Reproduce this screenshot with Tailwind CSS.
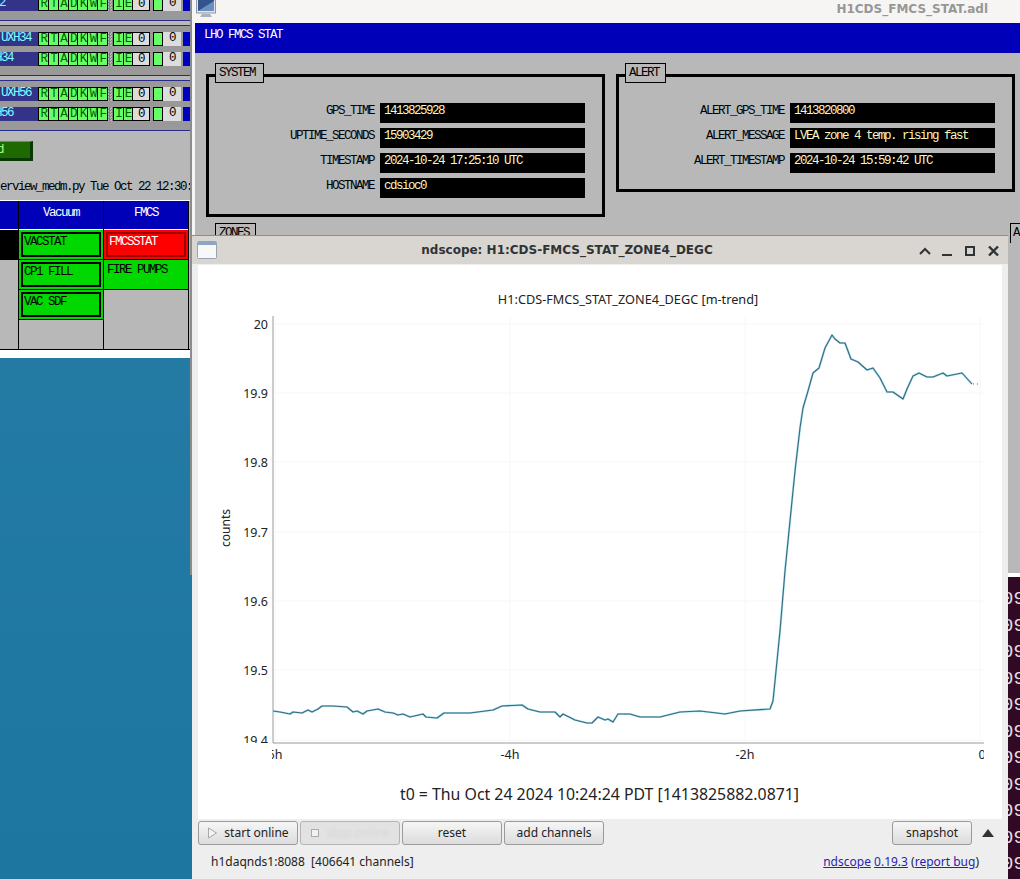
<!DOCTYPE html>
<html lang="en">
<head>
  <meta charset="UTF-8" />
  <title>ndscope on FMCS STAT</title>
  <script src="https://cdn.jsdelivr.net/npm/@tailwindcss/browser@4"></script>
</head>
<body class="bg-[#1f7aa3]">
<div class="relative w-[1020px] h-[879px] overflow-hidden bg-gradient-to-b from-[#287fa8] to-[#1c76a0] font-['Liberation_Mono',monospace] text-[12.5px] tracking-[-1.5px]">

  <!-- left overview window -->
  <div class="absolute left-0 top-0 w-[190px] h-[358px] bg-[#b8b8b8] overflow-hidden">
    <div id="bands" class="flex flex-col"></div>
    <div class="mt-[10px] w-[33px] h-[20px] bg-[#1f6a00] border-t border-t-[#5f9a48] border-r-[3px] border-b-[3px] border-r-[#063a00] border-b-[#063a00] text-[#a8ff80] leading-[16px]">
      <span class="block -ml-[3px]">d</span>
    </div>
    <div class="mt-[19px] h-[20px] leading-[14px] whitespace-nowrap text-black">erview_medm.py Tue Oct 22 12:30:</div>
    <div class="flex border-t border-white">
      <div class="w-[19px] h-[149px] border-r border-black flex flex-col">
        <div class="h-[29px] bg-[#0000b8] border-b border-white"></div>
        <div class="h-[30px] bg-black"></div>
      </div>
      <div class="w-[85px] border-r border-black flex flex-col">
        <div class="h-[29px] bg-[#0000b8] text-white text-center leading-[24px] border-b border-white">Vacuum</div>
        <div class="h-[30px] bg-[#00d800] border-b border-black p-[2px]"><div class="h-full border-2 border-black pl-[1px] leading-[17px]">VACSTAT</div></div>
        <div class="h-[30px] bg-[#00d800] border-b border-black p-[2px]"><div class="h-full border-2 border-black pl-[1px] leading-[17px]">CP1 FILL</div></div>
        <div class="h-[30px] bg-[#00d800] border-b border-black p-[2px]"><div class="h-full border-2 border-black pl-[1px] leading-[17px]">VAC SDF</div></div>
      </div>
      <div class="w-[85px] border-r border-black flex flex-col">
        <div class="h-[29px] bg-[#0000b8] text-white text-center leading-[24px] border-b border-white">FMCS</div>
        <div class="h-[30px] bg-[#ff0000] border-b border-black p-[2px] text-white"><div class="h-full border-2 border-[#a00000] pl-[1px] leading-[17px]">FMCSSTAT</div></div>
        <div class="h-[30px] bg-[#00d800] border-b border-black pl-[3px] pt-[2px] leading-[17px]">FIRE PUMPS</div>
      </div>
    </div>
    <div class="h-[1px] bg-black -mt-[1px] relative"></div>
    <div class="h-[8px] bg-white"></div>
  </div>
  <div class="absolute left-[190px] top-0 w-[2px] h-[575px] bg-[#8c8c8c]"></div>

  <!-- FMCS STAT window -->
  <div class="absolute left-[192px] top-0 w-[828px] h-[575px] bg-[#f6f5f4] flex flex-col">
    <div class="h-[23px] flex items-start justify-between">
      <svg class="ml-[4px]" width="20" height="18" viewBox="0 0 20 18">
        <rect x="0.5" y="-4" width="19" height="17" fill="#dfe5ea" stroke="#8d99a3"/>
        <rect x="2" y="-3" width="16" height="14" fill="#31548c"/>
        <path d="M2 11 18 1V11Z" fill="#6c8fc0"/>
        <path d="M6 14h8l2 3H4Z" fill="#aab2ba"/>
      </svg>
      <div class="mr-[32px] mt-[2px] text-[12px] tracking-normal leading-[15px] font-bold text-[#979797] font-['DejaVu_Sans',sans-serif]">H1CDS_FMCS_STAT.adl</div>
    </div>
    <div class="ml-[3px] h-[30px] bg-[#0000b8] text-white pl-[9px] leading-[24px]">LHO FMCS STAT</div>
    <div class="ml-[3px] flex-1 bg-[#b8b8b8] pl-[11px] pt-[21px]">
      <div class="flex gap-[11px]">
        <div class="relative w-[399px] h-[143px] border-[3px] border-black flex flex-col gap-[5px] pt-[26px]">
          <div class="absolute left-[6px] -top-[14px] h-[20px] w-[49px] border border-black bg-[#b8b8b8] pl-[3px] leading-[19px]">SYSTEM</div>
          <div class="flex gap-[6px] h-[20px]"><div class="w-[165px] text-right leading-[17px]">GPS_TIME</div><div class="w-[205px] bg-black text-[#f8f8c0] pl-[4px] leading-[17px]">1413825928</div></div>
          <div class="flex gap-[6px] h-[20px]"><div class="w-[165px] text-right leading-[17px]">UPTIME_SECONDS</div><div class="w-[205px] bg-black text-[#f8f8c0] pl-[4px] leading-[17px]">15903429</div></div>
          <div class="flex gap-[6px] h-[20px]"><div class="w-[165px] text-right leading-[17px]">TIMESTAMP</div><div class="w-[205px] bg-black text-[#f8f8c0] pl-[4px] leading-[17px]">2024-10-24 17:25:10 UTC</div></div>
          <div class="flex gap-[6px] h-[20px]"><div class="w-[165px] text-right leading-[17px]">HOSTNAME</div><div class="w-[205px] bg-black text-[#f8f8c0] pl-[4px] leading-[17px]">cdsioc0</div></div>
        </div>
        <div class="relative w-[399px] h-[118px] border-[3px] border-black flex flex-col gap-[5px] pt-[26px]">
          <div class="absolute left-[6px] -top-[14px] h-[20px] w-[41px] border border-black bg-[#b8b8b8] pl-[3px] leading-[19px]">ALERT</div>
          <div class="flex gap-[6px] h-[20px]"><div class="w-[165px] text-right leading-[17px]">ALERT_GPS_TIME</div><div class="w-[205px] bg-black text-[#f8f8c0] pl-[4px] leading-[17px]">1413820800</div></div>
          <div class="flex gap-[6px] h-[20px]"><div class="w-[165px] text-right leading-[17px]">ALERT_MESSAGE</div><div class="w-[205px] bg-black text-[#f8f8c0] pl-[4px] leading-[17px]">LVEA zone 4 temp. rising fast</div></div>
          <div class="flex gap-[6px] h-[20px]"><div class="w-[165px] text-right leading-[17px]">ALERT_TIMESTAMP</div><div class="w-[205px] bg-black text-[#f8f8c0] pl-[4px] leading-[17px]">2024-10-24 15:59:42 UTC</div></div>
        </div>
      </div>
      <div class="flex justify-between mt-[6px] pl-[9px] h-[20px] pr-0">
        <div class="w-[41px] border border-black pl-[3px] leading-[19px]">ZONES</div>
        <div class="w-[10px] border-l border-t border-black pl-[2px] leading-[19px] overflow-hidden">A</div>
      </div>
    </div>
  </div>

  <!-- terminal peeking out on the right -->
  <div class="absolute left-[1008px] top-[573px] w-[12px] h-[306px] bg-white pt-[4px]">
    <div id="term" class="h-[302px] bg-[#300a24] overflow-hidden flex flex-col pt-[9px]"></div>
  </div>

  <!-- ndscope window -->
  <div class="absolute left-[192px] top-[235px] w-[816px] h-[644px] bg-[#eeeeef] border-t border-[#8e8e8e] flex flex-col tracking-normal font-['Noto_Sans',sans-serif] text-[12px] text-[#222]">
    <div class="h-[28px] shrink-0 bg-[#d9d6d2] flex items-center relative">
      <svg class="ml-[5px]" width="20" height="18" viewBox="0 0 20 18">
        <rect x="0.5" y="0.5" width="19" height="17" rx="1" fill="#f7f8fa" stroke="#9aa3ad"/>
        <rect x="1" y="1" width="18" height="3" fill="#8aa6c8"/>
      </svg>
      <div class="absolute left-0 right-[66px] text-center text-[12px] font-bold font-['DejaVu_Sans',sans-serif] text-[#2e3436]">ndscope: H1:CDS-FMCS_STAT_ZONE4_DEGC</div>
      <svg class="absolute left-[726px] top-[9px]" width="84" height="12" viewBox="0 0 84 12" fill="none" stroke="#2e3436" stroke-width="2">
        <path d="M2 9 7 4 12 9"/>
        <path d="M24 10H34"/>
        <rect x="48" y="2" width="8" height="8"/>
        <path d="M71 1.500 80 10.500M80 1.500 71 10.500" stroke-width="2.400"/>
      </svg>
    </div>
    <div class="h-[1px] shrink-0 bg-[#eeeeef]"></div>
    <div class="mx-[6px] h-[554px] shrink-0 bg-white">
      <svg width="804" height="554" viewBox="198 264 804 554" font-family="Noto Sans, sans-serif" fill="#222">
        <defs>
          <clipPath id="xclip"><rect x="272" y="744" width="712" height="30"/></clipPath>
          <clipPath id="yclip"><rect x="230" y="310" width="42" height="432"/></clipPath>
          <polyline id="trace" fill="none" stroke-linejoin="round" points="273,710 280,711 290,713 293,711 302,712 308,709 312,711 318,708 322,705 333,705 347,706 353,711 357,710 363,713 367,710 378,708 385,711 393,712 398,714 403,713 410,716 423,713 426,716 437,717 444,712 470,712 493,709 502,705 522,704 528,708 540,711 555,711 560,716 563,713 575,719 587,722 592,722 598,716 605,719 608,718 613,721 618,713 630,713 640,716 660,716 680,711 700,710 725,713 740,710 770,708 773,700 776,670 780,630 785,570 790,520 795,470 800,427 803,407 808,390 813,372 819,367 825,347 832,334 835,338 840,342 845,342 851,358 858,361 867,369 873,367 880,377 887,391 893,391 903,398 907,388 913,375 919,372 927,376 933,376 943,372 947,375 962,372 972,383"/>
        </defs>
        <g stroke="#f7f7f7" stroke-width="1">
          <path d="M273 323H984M273 392H984M273 461H984M273 531H984M273 600H984M273 669H984M273 739H984"/>
          <path d="M275 315V742M510 315V742M745 315V742M980 315V742"/>
        </g>
        <path d="M273 315V742H984" fill="none" stroke="#9a9a9a" stroke-width="1"/>
        <use href="#trace" stroke="#a6e2ea" stroke-width="2.200"/>
        <use href="#trace" stroke="#3a6883" stroke-width="1.100"/>
        <path d="M973 383H980" stroke="#a05060" stroke-width="1" stroke-dasharray="1 3" fill="none"/>
        <g font-size="12.500" text-anchor="end">
          <text x="268" y="328">20</text>
          <text x="268" y="397">19.9</text>
          <text x="268" y="466">19.8</text>
          <text x="268" y="536">19.7</text>
          <text x="268" y="605">19.6</text>
          <text x="268" y="674">19.5</text>
          <text x="268" y="744" clip-path="url(#yclip)">19.4</text>
        </g>
        <g font-size="12.500" text-anchor="middle" clip-path="url(#xclip)">
          <text x="273" y="758">-6h</text>
          <text x="510" y="758">-4h</text>
          <text x="745" y="758">-2h</text>
          <text x="982" y="758">0</text>
        </g>
        <text x="628" y="303" font-size="12.700" text-anchor="middle">H1:CDS-FMCS_STAT_ZONE4_DEGC [m-trend]</text>
        <text x="230" y="527" font-size="12" text-anchor="middle" transform="rotate(-90 230 527)">counts</text>
        <text x="599.500" y="799" font-size="15.850" text-anchor="middle">t0 = Thu Oct 24 2024 10:24:24 PDT [1413825882.0871]</text>
      </svg>
    </div>
    <div class="flex items-center h-[24px] mt-[2px] ml-[6px] gap-[2px]">
      <button class="w-[100px] h-[24px] rounded-[3px] border border-[#9a9a9a] bg-gradient-to-b from-[#f6f6f6] to-[#dcdcdc] flex items-center justify-center gap-[6px]">
        <svg width="11" height="12" viewBox="0 0 11 12" fill="none" stroke="#a8a8a8"><path d="M1.500 1 9.500 6 1.500 11Z" fill="#f4f4f4"/></svg>start online</button>
      <button class="w-[100px] h-[24px] rounded-[3px] border border-[#b4b4b4] bg-[#e2e2e2] flex items-center justify-center gap-[8px] text-[#d8d8d8]">
        <span class="w-[8px] h-[8px] border border-[#aaa] bg-[#f2f2f2]"></span><span class="blur-[1px]">stop online</span></button>
      <button class="w-[100px] h-[24px] rounded-[3px] border border-[#9a9a9a] bg-gradient-to-b from-[#f6f6f6] to-[#dcdcdc]">reset</button>
      <button class="w-[100px] h-[24px] rounded-[3px] border border-[#9a9a9a] bg-gradient-to-b from-[#f6f6f6] to-[#dcdcdc]">add channels</button>
      <button class="ml-auto w-[80px] h-[24px] rounded-[3px] border border-[#9a9a9a] bg-gradient-to-b from-[#f6f6f6] to-[#dcdcdc]">snapshot</button>
      <svg class="ml-[8px] mr-[14px]" width="12" height="8" viewBox="0 0 12 8"><path d="M6 0 12 8H0Z" fill="#333"/></svg>
    </div>
    <div class="flex justify-between items-center h-[24px] mt-[5px] pl-[19px] pr-[29px] text-[12px]">
      <span class="whitespace-pre">h1daqnds1:8088  [406641 channels]</span>
      <span><a class="text-[#2a1fb0] underline">ndscope</a> <a class="text-[#2a1fb0] underline">0.19.3</a> (<a class="text-[#2a1fb0] underline">report bug</a>)</span>
    </div>
  </div>
</div>

<script>
  // MEDM status rows
  const rowHtml = (label, pad) => `
    <div class="flex items-center h-[14px] shrink-0 text-[#006400]">
      <div class="w-[38px] h-full bg-[#33338a] text-[#80ffff] leading-[13px] flex justify-end overflow-hidden whitespace-nowrap ${pad}">${label}</div>
      <div class="flex w-[70px] border border-black bg-[#66ff66] h-full">
        ${['R','T','A','D','K','W','F'].map(l => `<div class="flex-1 border-r border-black last:border-r-0 text-center leading-[12px]">${l}</div>`).join('')}
      </div>
      <div class="w-[5px] h-full bg-[repeating-conic-gradient(#808080_0_25%,#b8b8b8_0_50%)] bg-[length:3px_3px]"></div>
      <div class="flex w-[20px] border border-black bg-[#66ff66] h-full">
        ${['I','E'].map(l => `<div class="flex-1 border-r border-black last:border-r-0 text-center leading-[12px]">${l}</div>`).join('')}
      </div>
      <div class="w-[17px] h-full bg-[#dcdcdc] border-y border-r border-black text-black text-center leading-[12px]">0</div>
      <div class="w-[3px]"></div>
      <div class="w-[10px] h-full bg-[#66ff66] border border-black"></div>
      <div class="w-[18px] h-full bg-[#dcdcdc] text-black text-center leading-[13px]">0</div>
      <div class="w-[2px]"></div>
      <div class="w-[7px] h-full bg-[#0000c0]"></div>
    </div>`;
  const sep = '<div class="h-[1px] bg-[#2a2a8a]"></div><div class="h-[4px]"></div><div class="h-[1px] bg-[#2a2a8a]"></div>';
  document.getElementById('bands').innerHTML = `
    <div class="h-[23px] bg-[#999999] -mt-[3px] pt-0 box-content">${rowHtml('2', 'pr-[33px]')}</div>
    ${sep}
    <div class="h-[49px] bg-[#999999] pt-[6px] flex flex-col gap-[6px]">${rowHtml('UXH34', 'pr-[7px]')}${rowHtml('H34', 'pr-[25px]')}</div>
    ${sep}
    <div class="h-[49px] bg-[#999999] pt-[6px] flex flex-col gap-[6px]">${rowHtml('UXH56', 'pr-[7px]')}${rowHtml('H56', 'pr-[25px]')}</div>
    <div class="h-[1px] bg-[#2a2a8a]"></div>`;

  // terminal text, only the edge of it shows
  document.getElementById('term').innerHTML = Array.from({ length: 12 }, () =>
    '<div class="h-[26.5px] shrink-0 -ml-[6px] text-[19px] leading-[26px] text-[#e4dce4] tracking-normal whitespace-nowrap font-[\'DejaVu_Sans_Mono\',monospace]">09</div>'
  ).join('');
</script>
</body>
</html>
